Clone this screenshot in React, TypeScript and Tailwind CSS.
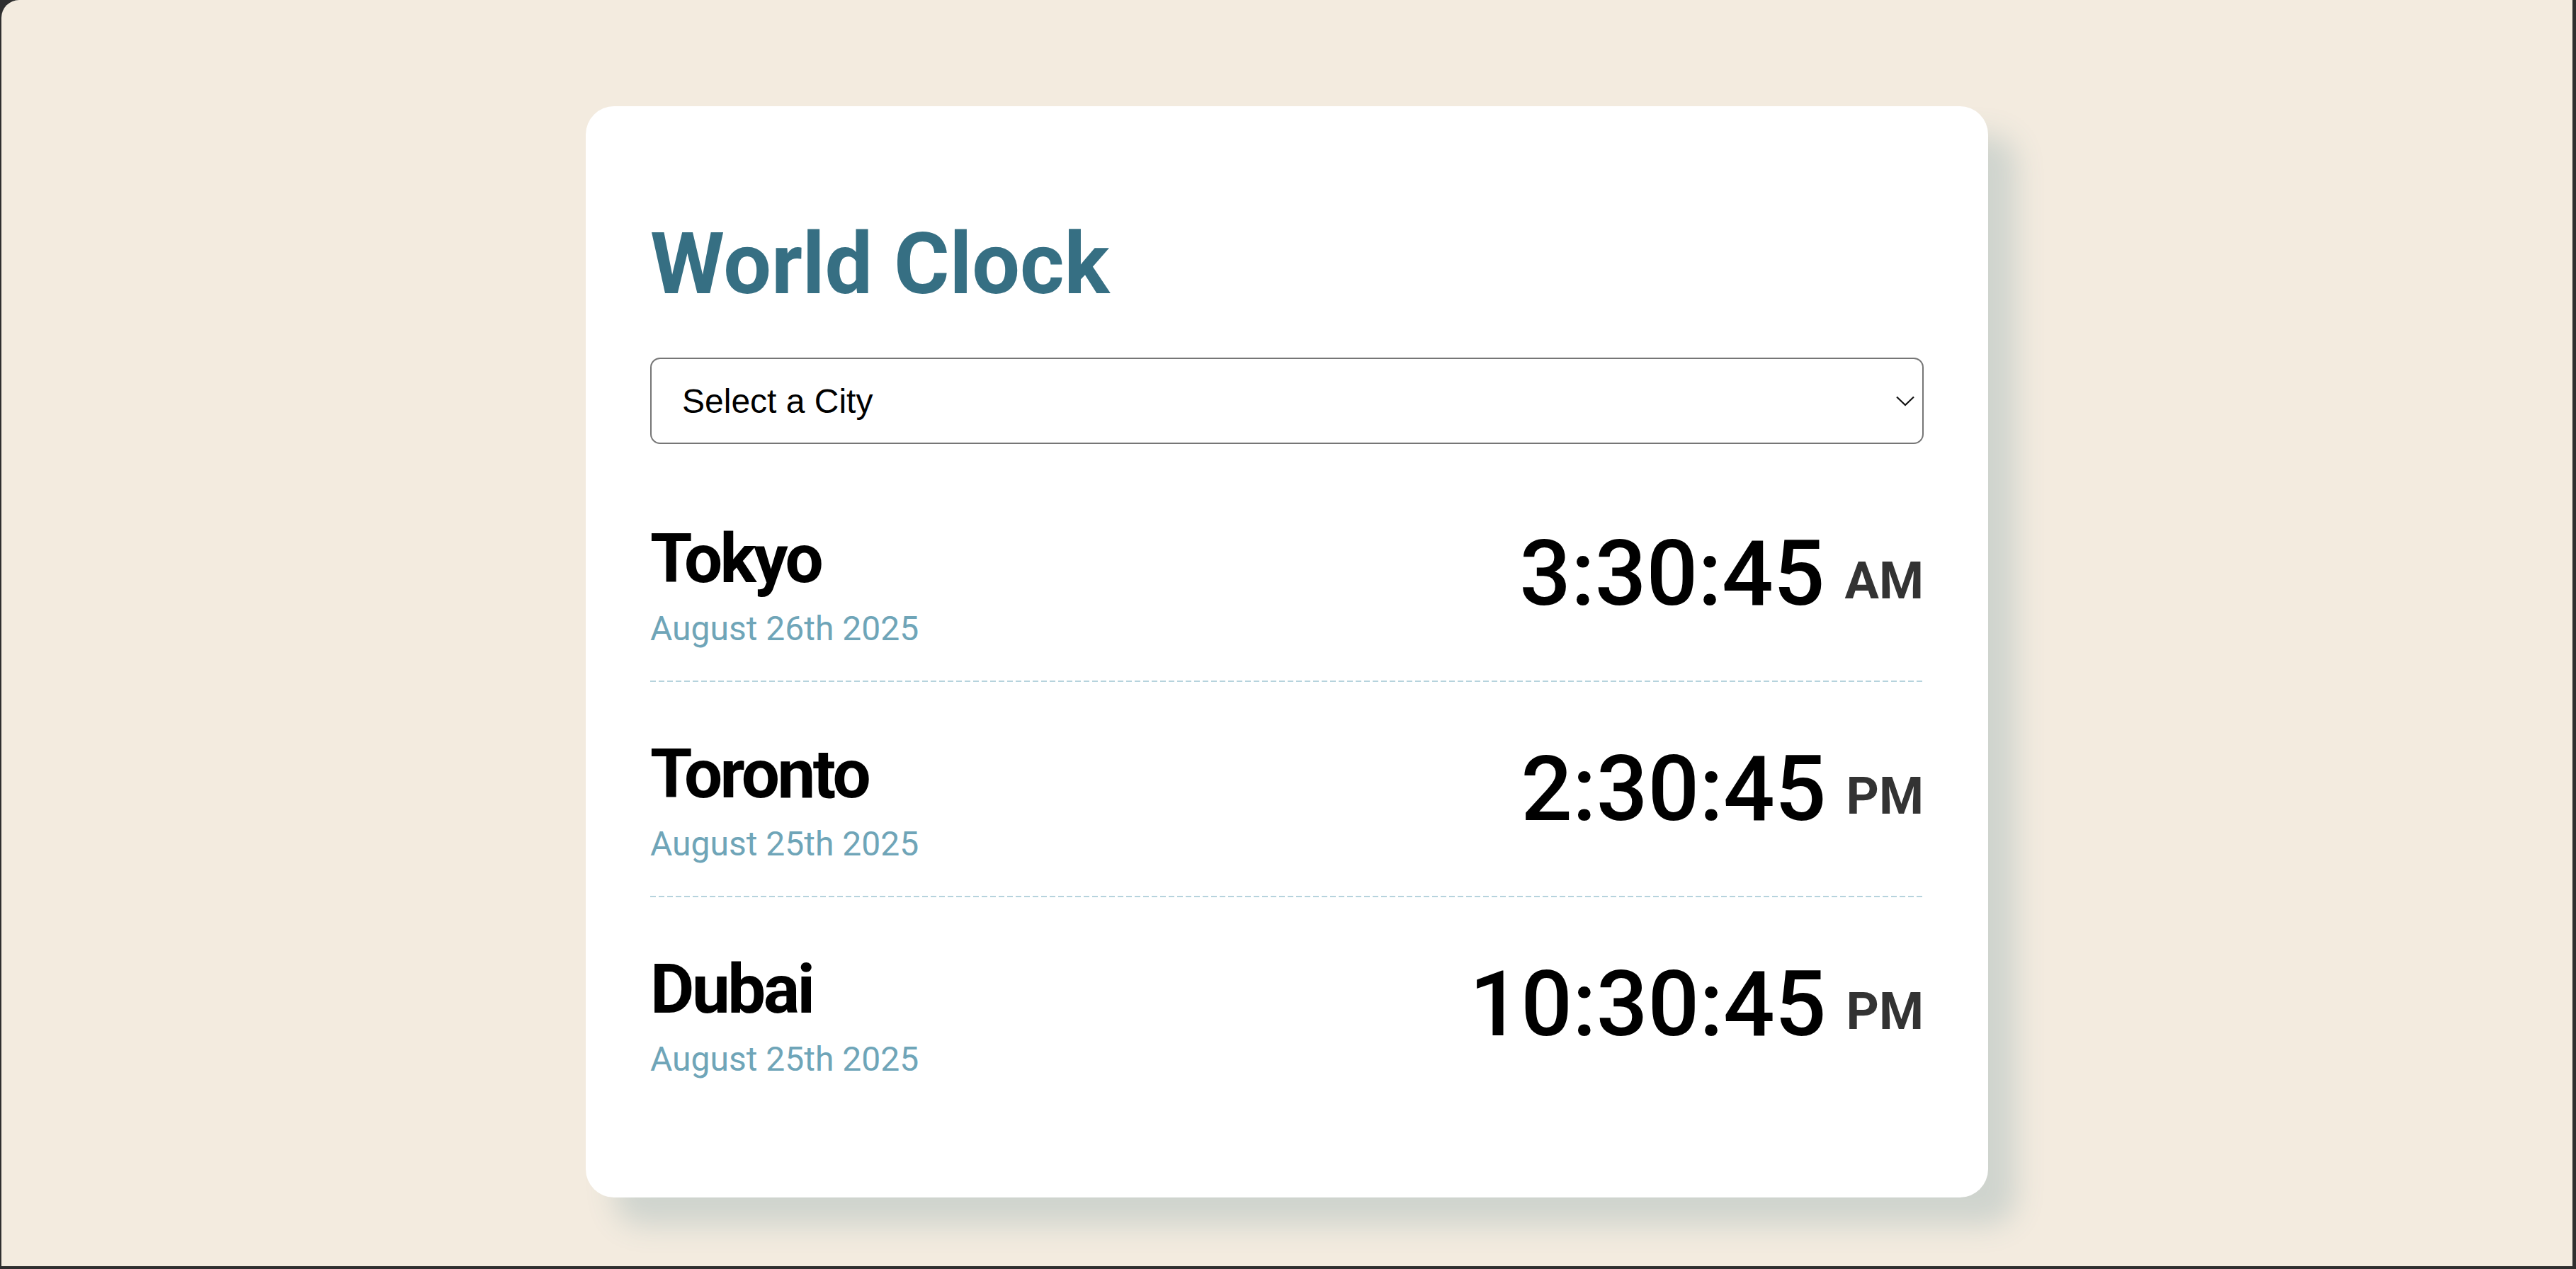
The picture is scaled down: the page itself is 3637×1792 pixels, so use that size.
import React from "react";

type Row = { city: string; date: string; time: string; period: string };

const rows: Row[] = [
  { city: "Tokyo", date: "August 26th 2025", time: "3:30:45", period: "AM" },
  { city: "Toronto", date: "August 25th 2025", time: "2:30:45", period: "PM" },
  { city: "Dubai", date: "August 25th 2025", time: "10:30:45", period: "PM" },
];

export default function App() {
  return (
    <div className="h-[1792px] w-full bg-[#2f2f2f] flex flex-col overflow-hidden">
      <div className="ml-[2px] mr-[5px] h-[1788px] bg-[#f3ebdf] rounded-tl-[25px] flex justify-center pt-[150px]">
        <div className="w-[1980px] h-[1541px] bg-white rounded-[40px] shadow-[40px_40px_40px_#cfd4ce] px-[91px] pt-[153px] pb-[122px] font-['Roboto',sans-serif]">
          <h1 className="text-[120px] leading-[140px] font-bold text-[#366f83]">World Clock</h1>
          <div className="mt-[62px] h-[122px] border-2 border-[#767676] rounded-[14px] flex items-center justify-between pl-[43px] pr-[11px]">
            <span className="font-['Liberation_Sans',Arial,sans-serif] text-[48px] leading-[55px] text-black">
              Select a City
            </span>
            <svg width="26" height="15" viewBox="0 0 26 15" fill="none">
              <path d="M1 1.5 L13 13 L25 1.5" stroke="#111" strokeWidth="2.2" />
            </svg>
          </div>
          <div className="mt-[32px] flex flex-col">
            {rows.map((r, i) => (
              <div key={r.city} className="flex flex-col">
                <div className="flex justify-between items-start pt-[74px] pb-[45px]">
                  <div className="flex flex-col">
                    <div className="text-[96px] leading-[112px] font-bold tracking-[-3.5px] text-black">{r.city}</div>
                    <div className="mt-[15px] text-[48px] leading-[56px] text-[#6fa5b8]">{r.date}</div>
                  </div>
                  <div className="mt-[2px] flex items-end">
                    <span className="text-[128px] leading-[150px] font-medium text-black">{r.time}</span>
                    <span className="ml-[28px] mb-[22px] text-[72px] leading-[84px] font-bold text-[#333333]">
                      {r.period}
                    </span>
                  </div>
                </div>
                {i < rows.length - 1 && (
                  <div className="h-[2px] w-full bg-[repeating-linear-gradient(to_right,#b6d3dd_0px,#b6d3dd_8px,transparent_8px,transparent_12px)]" />
                )}
              </div>
            ))}
          </div>
        </div>
      </div>
    </div>
  );
}
